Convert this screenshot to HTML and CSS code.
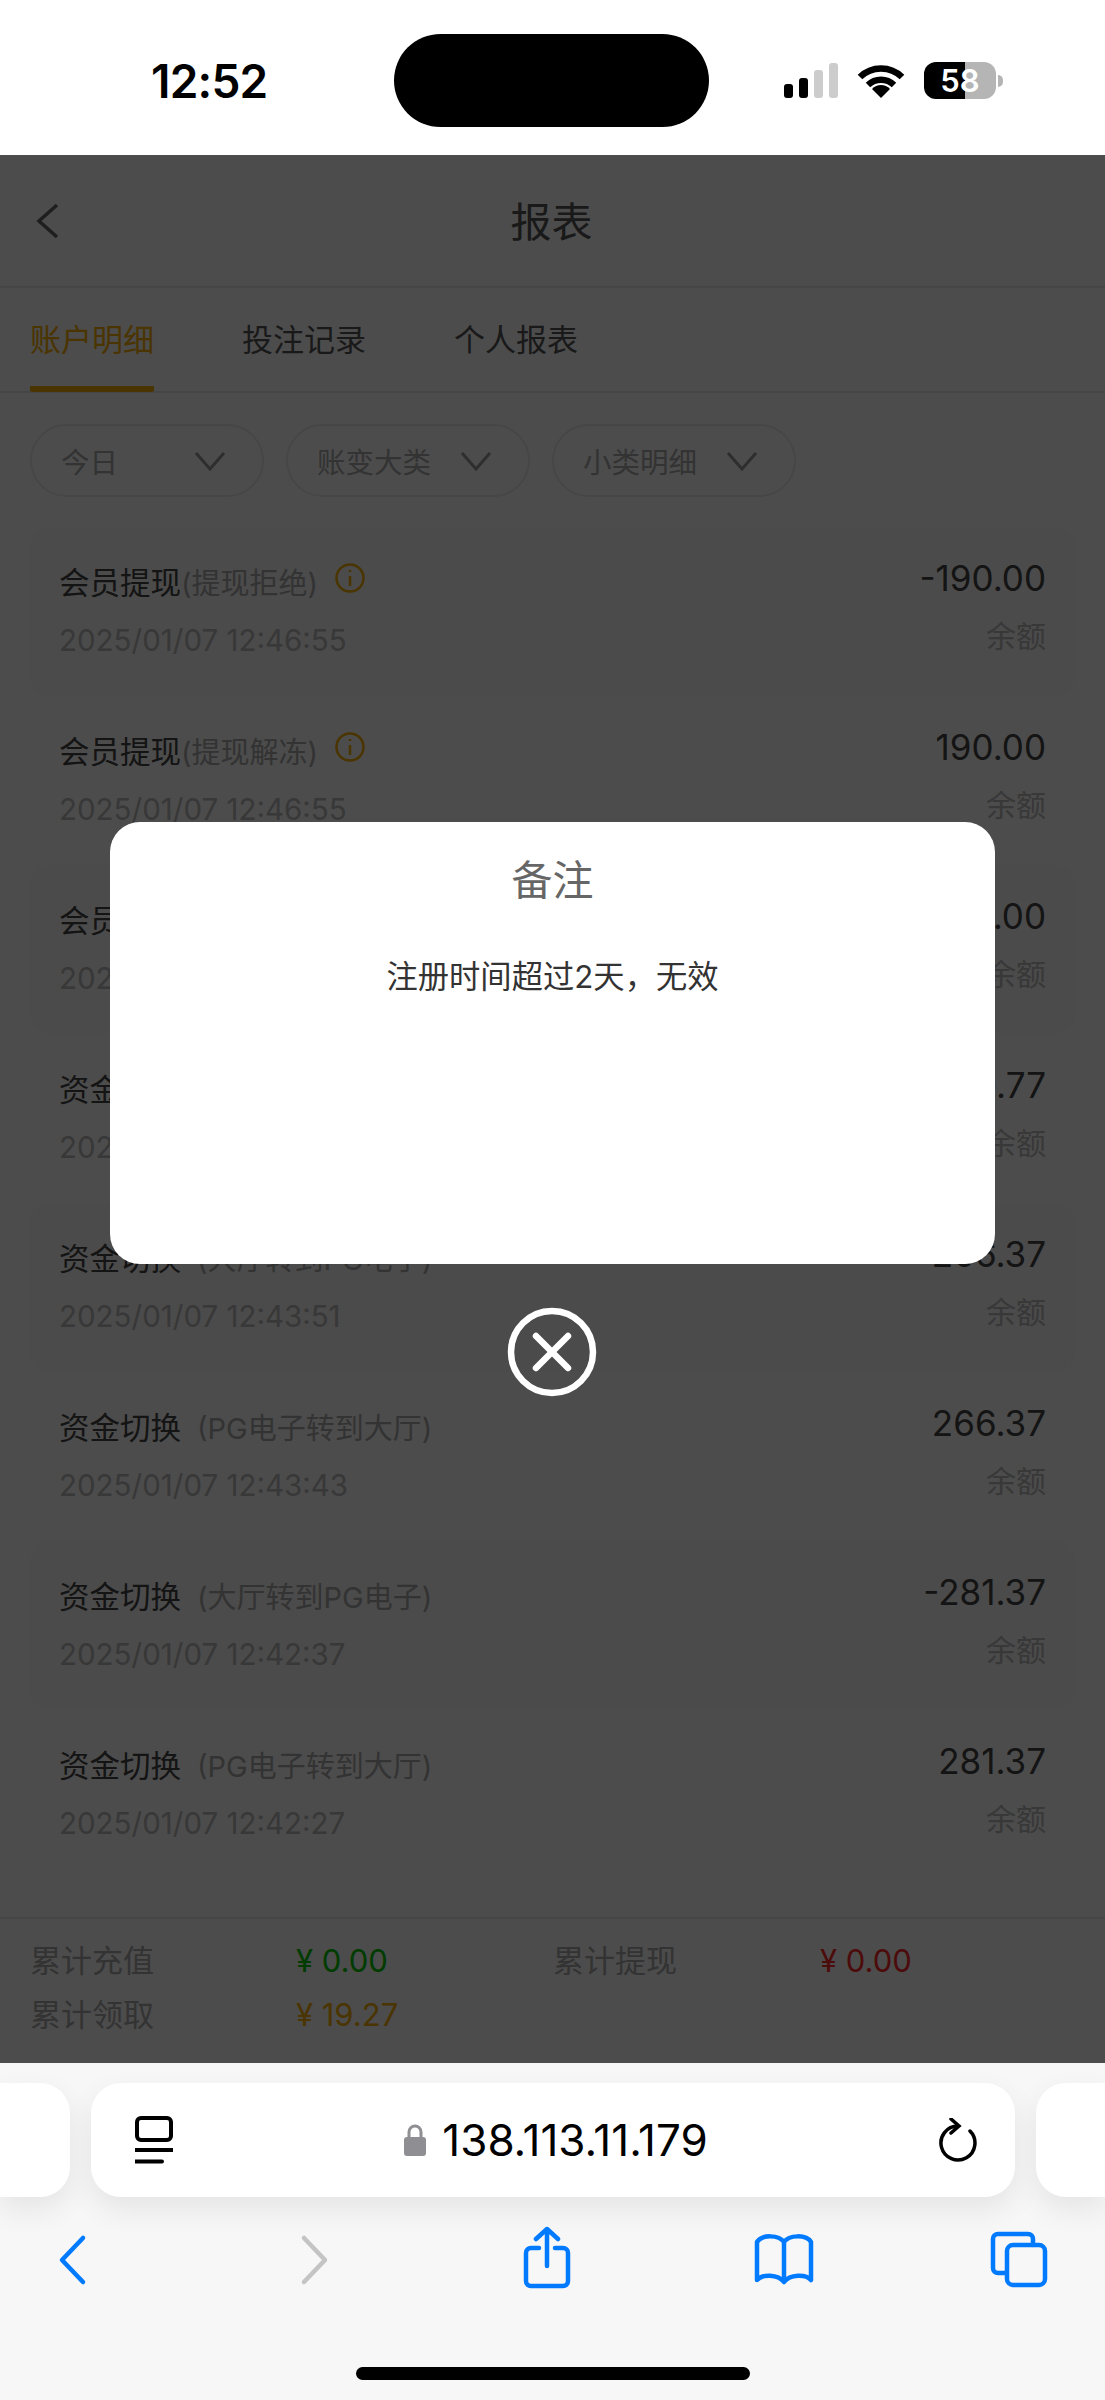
FILE: index.html
```html
<!DOCTYPE html>
<html lang="zh-CN">
<head>
    <meta charset="UTF-8">
    <meta name="viewport" content="width=device-width, initial-scale=1.0">
    <title>报表</title>
    <link rel="stylesheet" href="styles.css">
</head>
<body>
    <div class="status-bar">
        <span class="clock">12:52</span>
        <div class="island"></div>
        <div class="signal">
            <i class="bar bar-1"></i>
            <i class="bar bar-2"></i>
            <i class="bar bar-3 off"></i>
            <i class="bar bar-4 off"></i>
        </div>
        <svg class="wifi" viewBox="0 0 48 35">
            <path d="M3 14A30 30 0 0 1 45 14M11 22A19 19 0 0 1 37 22" fill="none" stroke="#000" stroke-width="6.5"/>
            <path d="M15 26A12 12 0 0 1 33 26L24 35Z"/>
        </svg>
        <div class="battery">58</div>
        <div class="battery-nub"></div>
    </div>

    <div class="page">
        <div class="header">
            <svg class="back" viewBox="0 0 24 36">
                <path d="M22 2L4 18L22 34" fill="none" stroke="#666" stroke-width="3.5"/>
            </svg>
            <h1>报表</h1>
        </div>

        <div class="tabs">
            <div class="tab active">账户明细</div>
            <div class="tab">投注记录</div>
            <div class="tab">个人报表</div>
        </div>

        <div class="filters">
            <div class="pill pill-short">今日<svg viewBox="0 0 32 20"><path d="M2 2L16 18L30 2"/></svg></div>
            <div class="pill">账变大类<svg viewBox="0 0 32 20"><path d="M2 2L16 18L30 2"/></svg></div>
            <div class="pill">小类明细<svg viewBox="0 0 32 20"><path d="M2 2L16 18L30 2"/></svg></div>
        </div>

        <div class="list">
            <div class="row">
                <div>
                    <div class="row-title">会员提现<small>(提现拒绝)</small>
                        <svg class="info" viewBox="0 0 30 30"><circle cx="15" cy="15" r="13.500"/><path d="M15 13V23M15 7V9"/></svg>
                    </div>
                    <div class="row-date">2025/01/07 12:46:55</div>
                </div>
                <div class="row-side">
                    <div class="amount">-190.00</div>
                    <div class="balance">余额</div>
                </div>
            </div>
            <div class="row">
                <div>
                    <div class="row-title">会员提现<small>(提现解冻)</small>
                        <svg class="info" viewBox="0 0 30 30"><circle cx="15" cy="15" r="13.500"/><path d="M15 13V23M15 7V9"/></svg>
                    </div>
                    <div class="row-date">2025/01/07 12:46:55</div>
                </div>
                <div class="row-side">
                    <div class="amount">190.00</div>
                    <div class="balance">余额</div>
                </div>
            </div>
            <div class="row">
                <div>
                    <div class="row-title">会员提现<small>(提现申请)</small></div>
                    <div class="row-date">2025/01/07 12:45:10</div>
                </div>
                <div class="row-side">
                    <div class="amount">-190.00</div>
                    <div class="balance">余额</div>
                </div>
            </div>
            <div class="row">
                <div>
                    <div class="row-title">资金切换<small class="spaced">(PG电子转到大厅)</small></div>
                    <div class="row-date">2025/01/07 12:44:02</div>
                </div>
                <div class="row-side">
                    <div class="amount">10.77</div>
                    <div class="balance">余额</div>
                </div>
            </div>
            <div class="row">
                <div>
                    <div class="row-title">资金切换<small class="spaced">(大厅转到PG电子)</small></div>
                    <div class="row-date">2025/01/07 12:43:51</div>
                </div>
                <div class="row-side">
                    <div class="amount">-266.37</div>
                    <div class="balance">余额</div>
                </div>
            </div>
            <div class="row">
                <div>
                    <div class="row-title">资金切换<small class="spaced">(PG电子转到大厅)</small></div>
                    <div class="row-date">2025/01/07 12:43:43</div>
                </div>
                <div class="row-side">
                    <div class="amount">266.37</div>
                    <div class="balance">余额</div>
                </div>
            </div>
            <div class="row">
                <div>
                    <div class="row-title">资金切换<small class="spaced">(大厅转到PG电子)</small></div>
                    <div class="row-date">2025/01/07 12:42:37</div>
                </div>
                <div class="row-side">
                    <div class="amount">-281.37</div>
                    <div class="balance">余额</div>
                </div>
            </div>
            <div class="row">
                <div>
                    <div class="row-title">资金切换<small class="spaced">(PG电子转到大厅)</small></div>
                    <div class="row-date">2025/01/07 12:42:27</div>
                </div>
                <div class="row-side">
                    <div class="amount">281.37</div>
                    <div class="balance">余额</div>
                </div>
            </div>
        </div>

        <div class="summary">
            <span class="label">累计充值</span><span class="green">¥ 0.00</span>
            <span class="label">累计提现</span><span class="red">¥ 0.00</span>
            <span class="label">累计领取</span><span class="gold">¥ 19.27</span>
        </div>

        <!-- dimmed layer with the remark dialog -->
        <div class="overlay">
            <div class="dialog">
                <h2>备注</h2>
                <p>注册时间超过2天，无效</p>
            </div>
            <svg class="close" viewBox="0 0 90 90">
                <circle cx="45" cy="45" r="41"/>
                <path d="M29 29L61 61M61 29L29 61"/>
            </svg>
        </div>
    </div>

    <div class="toolbar">
        <div class="url-row">
            <div class="url-stub left"></div>
            <div class="url-bar">
                <svg class="page-icon" viewBox="0 0 38 48">
                    <rect x="2" y="2" width="34" height="22" rx="4"/>
                    <path d="M0 34H38M0 45.500H27"/>
                </svg>
                <div class="address">
                    <svg class="lock" viewBox="0 0 22 32">
                        <path d="M5 14V8a6 6 0 0 1 12 0V14" fill="none" stroke="#8e8e93" stroke-width="3"/>
                        <rect y="13" width="22" height="19" rx="3" fill="#8e8e93"/>
                    </svg>
                    <span>138.113.11.179</span>
                </div>
                <svg class="reload" viewBox="0 0 38 44">
                    <path d="M31 13A17 17 0 1 1 19 8M12 1L20 8L12 15"/>
                </svg>
            </div>
            <div class="url-stub right"></div>
        </div>

        <div class="tools">
            <svg viewBox="0 0 60 64"><path d="M41 12L20 34L41 56"/></svg>
            <svg viewBox="0 0 60 64"><path class="disabled" d="M19 12L40 34L19 56"/></svg>
            <svg viewBox="0 0 60 64"><path d="M22 22H14a5 5 0 0 0-5 5V55a5 5 0 0 0 5 5H46a5 5 0 0 0 5-5V27a5 5 0 0 0-5-5H38M30 3V40M19 13L30 3L41 13"/></svg>
            <svg viewBox="0 0 60 64"><path d="M30 16C25 9 8 8 3 16V54C8 48 24 48 30 56C36 48 52 48 57 54V16C52 8 35 9 30 16ZM30 16V56"/></svg>
            <svg viewBox="0 0 60 64"><path d="M17 47H10a5 5 0 0 1-5-5V13a5 5 0 0 1 5-5H40a5 5 0 0 1 5 5V19"/><rect x="19" y="19" width="38" height="40" rx="6"/></svg>
        </div>

        <div class="home-bar"></div>
    </div>
</body>
</html>
```

FILE: styles.css
```css
* {
    box-sizing: border-box;
}
body {
    margin: 0;
    width: 1105px;
    height: 2400px;
    overflow: hidden;
    font-family: Inter, 'Noto Sans CJK SC', sans-serif;
    background: #fff;
    color: #000;
}

/* status bar */
.status-bar {
    height: 155px;
    display: flex;
    align-items: center;
    background: #fff;
}
.clock {
    width: 116px;
    margin-left: 151px;
    margin-top: 7px;
    font-size: 46px;
    font-weight: 600;
    letter-spacing: -0.800px;
    white-space: nowrap;
}
.island {
    width: 315px;
    height: 93px;
    margin-left: 127px;
    margin-top: 6px;
    border-radius: 47px;
    background: #000;
}
.signal {
    display: flex;
    align-items: flex-end;
    gap: 6px;
    height: 35px;
    margin-left: 75px;
    margin-top: 6px;
}
.bar {
    width: 9px;
    border-radius: 3px;
    background: #000;
}
.bar-1 { height: 14px; }
.bar-2 { height: 20px; }
.bar-3 { height: 28px; }
.bar-4 { height: 35px; }
.bar.off {
    background: #ccc;
}
.wifi {
    width: 48px;
    height: 35px;
    margin-left: 19px;
    margin-top: 6px;
}
.battery {
    width: 72px;
    height: 37px;
    margin-left: 19px;
    margin-top: 6px;
    border-radius: 12px;
    background: linear-gradient(90deg, #000 57%, #b5b5b5 57%);
    color: #fff;
    font-size: 31px;
    font-weight: 600;
    line-height: 37px;
    text-align: center;
}
.battery-nub {
    width: 5px;
    height: 12px;
    margin-left: 2px;
    margin-top: 6px;
    border-radius: 0 6px 6px 0;
    background: #b5b5b5;
}

/* report page, everything here sits under the overlay */
.page {
    position: relative;
    height: 1908px;
    display: flex;
    flex-direction: column;
    background: #fff;
}
.header {
    height: 133px;
    display: flex;
    align-items: center;
    justify-content: center;
    border-bottom: 2px solid #ececec;
}
.header h1 {
    margin: -3px 0 0 -2px;
    font-size: 41px;
    font-weight: 400;
    color: #555;
}
.back {
    position: absolute;
    left: 35px;
    top: 48px;
    width: 24px;
    height: 36px;
}
.tabs {
    height: 105px;
    display: flex;
    gap: 88px;
    padding-left: 30px;
    border-bottom: 2px solid #ececec;
}
.tab {
    font-size: 31px;
    line-height: 103px;
    color: #555;
}
.tab.active {
    color: #f9ae00;
    border-bottom: 6px solid #f9ae00;
    height: 104px;
    border-radius: 0 0 2px 2px;
}
.filters {
    display: flex;
    gap: 22px;
    padding: 31px 30px 0;
}
.pill {
    width: 244px;
    height: 73px;
    display: flex;
    align-items: center;
    justify-content: space-between;
    padding: 0 36px 0 29px;
    border: 2px solid #ececec;
    border-radius: 37px;
    font-size: 28.500px;
    color: #aaa;
}
.pill-short {
    width: 234px;
    padding-right: 36px;
}
.pill svg {
    width: 32px;
    height: 20px;
}
.pill path {
    fill: none;
    stroke: #999;
    stroke-width: 3;
}

/* transaction rows, every other one is tinted */
.list {
    flex: 1;
    margin-top: 30px;
    padding: 0 30px;
}
.row {
    height: 169px;
    display: flex;
    justify-content: space-between;
    padding: 34px 29px 0 29px;
    border-radius: 20px;
}
.row:nth-child(odd) {
    background: #fafafa;
}
.row-title {
    display: flex;
    align-items: center;
    height: 40px;
    font-size: 30.500px;
    color: #444;
}
.row-title small {
    font-size: 29px;
    color: #aaa;
}
.row-title small.spaced {
    margin-left: 16px;
}
.info {
    width: 30px;
    height: 30px;
    margin: -7px 0 0 17px;
    fill: none;
    stroke: #f9ae00;
    stroke-width: 2.500;
}
.row-date {
    margin-top: 19px;
    font-size: 29.500px;
    line-height: 40px;
    color: #bbb;
}
.row-side {
    margin-top: -3px;
    text-align: right;
}
.amount {
    font-size: 35px;
    line-height: 40px;
    color: #444;
}
.balance {
    margin-top: 18px;
    font-size: 30px;
    line-height: 40px;
    color: #bbb;
}

.summary {
    height: 146px;
    display: grid;
    grid-template-columns: 266px 257px 267px 1fr;
    grid-auto-rows: 40px;
    row-gap: 14px;
    padding: 22px 0 0 30px;
    border-top: 2px solid #ececec;
    font-size: 31px;
    line-height: 40px;
}
.summary .label {
    color: #aaa;
}
.green { color: #00c800; }
.red { color: #ff2a2a; }
.gold { color: #f9ae00; }

.overlay {
    position: absolute;
    inset: 0;
    display: flex;
    flex-direction: column;
    align-items: center;
    padding-top: 667px;
    background: rgba(0, 0, 0, 0.7);
}
.dialog {
    width: 885px;
    height: 442px;
    padding-top: 32px;
    border-radius: 30px;
    background: #fff;
    text-align: center;
}
.dialog h2 {
    margin: 0;
    font-size: 41px;
    font-weight: 400;
    line-height: 52px;
    color: #666;
}
.dialog p {
    margin: 50px 0 0;
    font-size: 31.300px;
    line-height: 42px;
    color: #333;
}
.close {
    width: 90px;
    height: 90px;
    margin: 43px 2px 0 0;
    fill: none;
    stroke: #fff;
    stroke-width: 6.500;
    stroke-linecap: round;
}

/* browser chrome */
.toolbar {
    height: 337px;
    padding-top: 20px;
    background: #f7f7f7;
}
.url-row {
    display: flex;
    gap: 21px;
}
.url-bar {
    width: 924px;
    height: 114px;
    display: flex;
    align-items: center;
    justify-content: space-between;
    padding: 0 37px 0 44px;
    border-radius: 30px;
    background: #fff;
    box-shadow: 0 12px 30px rgba(0, 0, 0, 0.08);
}
.url-stub {
    flex: 1;
    height: 114px;
    background: #fff;
    box-shadow: 0 12px 30px rgba(0, 0, 0, 0.08);
}
.url-stub.left {
    border-radius: 0 30px 30px 0;
}
.url-stub.right {
    border-radius: 30px 0 0 30px;
}
.page-icon {
    width: 38px;
    height: 48px;
    fill: none;
    stroke: #000;
    stroke-width: 4;
    stroke-linecap: round;
}
.address {
    display: flex;
    align-items: center;
    gap: 16px;
    font-size: 44px;
}
.lock {
    width: 22px;
    height: 32px;
}
.reload {
    width: 38px;
    height: 44px;
    fill: none;
    stroke: #000;
    stroke-width: 3.500;
    stroke-linecap: round;
}
.tools {
    display: grid;
    grid-template-columns: 243px 232px 237px 234px 60px;
    margin-top: 29px;
    padding-left: 42px;
}
.tools svg {
    width: 60px;
    height: 64px;
    fill: none;
    stroke: #007aff;
    stroke-width: 4.500;
    stroke-linecap: round;
    stroke-linejoin: round;
}
.tools .disabled {
    stroke: #c4c4c4;
}
.home-bar {
    width: 394px;
    height: 13px;
    margin: 77px 0 0 356px;
    border-radius: 7px;
    background: #000;
}
```
